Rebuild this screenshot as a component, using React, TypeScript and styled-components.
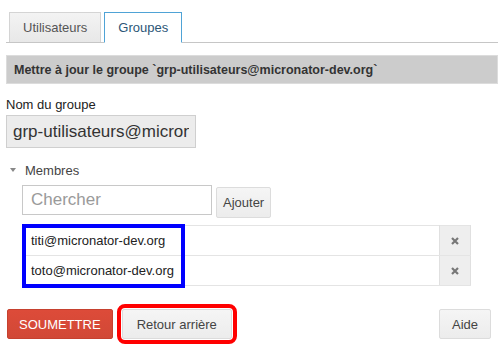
import * as React from 'react';
import styled, { createGlobalStyle } from 'styled-components';

const GlobalStyle = createGlobalStyle`
    body {
        margin: 0;
        background: #fff;
        font-family: 'Liberation Sans', Arial, sans-serif;
        font-size: 13px;
        color: #222;
    }
`;

const members = ['titi@micronator-dev.org', 'toto@micronator-dev.org'];

export default function App() {
    return (
        <>
            <GlobalStyle />
            <Page>
                <TabBar>
                    <Tab>Utilisateurs</Tab>
                    <Tab active>Groupes</Tab>
                </TabBar>
                <Header>Mettre à jour le groupe `grp-utilisateurs@micronator-dev.org`</Header>

                <Label>Nom du groupe</Label>
                <NameInput readOnly value="grp-utilisateurs@micronator-dev.org" />

                <Section>
                    <Caret />
                    Membres
                </Section>

                <SearchRow>
                    <SearchInput placeholder="Chercher" />
                    <Button>Ajouter</Button>
                </SearchRow>

                <TableWrap>
                    <MemberTable>
                        <tbody>
                            {members.map((m) => (
                                <tr key={m}>
                                    <EmailCell>{m}</EmailCell>
                                    <RemoveCell>
                                        <svg width="8" height="8" viewBox="0 0 8 8">
                                            <path d="M1 1L7 7M7 1L1 7" stroke="#777" strokeWidth="2.2" />
                                        </svg>
                                    </RemoveCell>
                                </tr>
                            ))}
                        </tbody>
                    </MemberTable>
                    <BlueMark />
                </TableWrap>

                <Actions>
                    <Button primary>SOUMETTRE</Button>
                    <RedMark>
                        <Button>Retour arrière</Button>
                    </RedMark>
                    <Spacer />
                    <Button>Aide</Button>
                </Actions>
            </Page>
        </>
    );
}

const Page = styled.div`
    padding: 12px 2px 0 6px;
`;

const TabBar = styled.div`
    display: flex;
    gap: 3px;
    padding-left: 3px;
    height: 30px;
    border-bottom: 1px solid #c6c6c6;
`;

const Tab = styled.div<{ active?: boolean }>`
    display: flex;
    align-items: center;
    justify-content: center;
    padding: 0 13px;
    box-sizing: border-box;
    border: 1px solid ${(p) => (p.active ? '#4fa3d6' : '#d4d4d4')};
    border-bottom: ${(p) => (p.active ? '1px solid #fff' : 'none')};
    background: ${(p) => (p.active ? '#fff' : 'linear-gradient(#f3f3f3, #e8e8e8)')};
    color: ${(p) => (p.active ? '#2c5677' : '#555')};
    margin-bottom: ${(p) => (p.active ? '-1px' : '0')};
    height: ${(p) => (p.active ? '31px' : '30px')};
`;

const Header = styled.div`
    margin-top: 12px;
    height: 29px;
    display: flex;
    align-items: center;
    padding-left: 7px;
    background: #cccccc;
    border: 1px solid #dcdcdc;
    box-sizing: border-box;
    font-weight: bold;
    font-size: 12.5px;
    color: #333;
`;

const Label = styled.div`
    margin-top: 13px;
    line-height: 16px;
    color: #222;
`;

const NameInput = styled.input`
    display: block;
    margin-top: 2px;
    width: 190px;
    height: 33px;
    box-sizing: border-box;
    padding: 0 6px;
    border: 1px solid #cfcfcf;
    background: #ececec;
    font-family: inherit;
    font-size: 17px;
    color: #333;
    outline: none;
`;

const Section = styled.div`
    display: flex;
    align-items: center;
    margin-top: 14px;
    height: 16px;
    padding-left: 4px;
    color: #444;
`;

const Caret = styled.span`
    width: 0;
    height: 0;
    border-left: 3.5px solid transparent;
    border-right: 3.5px solid transparent;
    border-top: 4px solid #888;
    margin-right: 9px;
`;

const SearchRow = styled.div`
    display: flex;
    align-items: flex-start;
    gap: 4px;
    margin-top: 7px;
    padding-left: 16px;
`;

const SearchInput = styled.input`
    width: 190px;
    height: 30px;
    box-sizing: border-box;
    padding: 0 8px;
    border: 1px solid #c8c8c8;
    font-family: inherit;
    font-size: 17px;
    color: #333;
    outline: none;
    &::placeholder {
        color: #9a9a9a;
    }
`;

const Button = styled.button<{ primary?: boolean }>`
    height: 30px;
    box-sizing: border-box;
    padding: 0 ${(p) => (p.primary ? '11px' : '12px')};
    border-radius: 2px;
    font-family: inherit;
    font-size: 13px;
    border: 1px solid ${(p) => (p.primary ? '#c6412f' : '#dcdcdc')};
    background: ${(p) => (p.primary ? 'linear-gradient(#dd4b39, #d14836)' : 'linear-gradient(#f5f5f5, #ececec)')};
    color: ${(p) => (p.primary ? '#fff' : '#444')};
    ${SearchRow} & {
        margin-top: 2px;
        height: 31px;
        padding: 0 6px;
    }
`;

const TableWrap = styled.div`
    position: relative;
    margin-top: 7px;
    margin-left: 18px;
    width: 447px;
`;

const MemberTable = styled.table`
    width: 100%;
    border-collapse: collapse;
    border-top: 1px solid #e4e4e4;
`;

const EmailCell = styled.td`
    height: 29px;
    padding: 0 0 0 7px;
    border-bottom: 1px solid #e4e4e4;
    color: #222;
`;

const RemoveCell = styled.td`
    width: 30px;
    padding: 0;
    text-align: center;
    background: #eeeeee;
    border-left: 1px solid #e0e0e0;
    border-right: 1px solid #e0e0e0;
    border-bottom: 1px solid #e4e4e4;
`;

const BlueMark = styled.div`
    position: absolute;
    left: -2px;
    top: -1px;
    width: 163px;
    height: 64px;
    box-sizing: border-box;
    border: 4px solid #0000ff;
    pointer-events: none;
`;

const Actions = styled.div`
    display: flex;
    align-items: center;
    margin-top: 18px;
    padding-left: 1px;
    padding-right: 7px;
`;

const RedMark = styled.div`
    display: flex;
    margin-left: 4px;
    padding: 1px;
    border: 4px solid #ff0000;
    border-radius: 8px;
    button {
        padding: 0 14px;
    }
`;

const Spacer = styled.div`
    flex: 1;
`;
